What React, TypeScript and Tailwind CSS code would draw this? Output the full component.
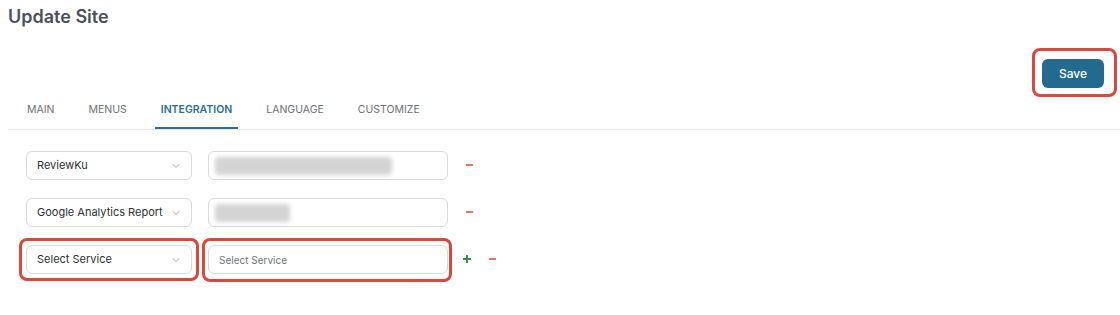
import { ChevronDown } from 'lucide-react';

const tabs = ['Main', 'Menus', 'Integration', 'Language', 'Customize'];

function Highlight() {
    return <div className="pointer-events-none absolute -inset-[7px] rounded-lg border-[3px] border-[#d9473d]" />;
}

function RemoveMark() {
    return <span className="ml-[18px] mt-[13px] block h-[2px] w-[7px] self-start bg-[#e87272]" />;
}

function AddMark() {
    return (
        <span className="relative ml-[15px] mt-[10px] block h-[8px] w-[8px] self-start">
            <span className="absolute left-0 top-[3px] h-[2px] w-[8px] bg-[#2e9648]" />
            <span className="absolute left-[3px] top-0 h-[8px] w-[2px] bg-[#2e9648]" />
        </span>
    );
}

function ServiceSelect({ value }: { value: string }) {
    return (
        <div className="flex h-[29px] w-[166px] items-center justify-between rounded-md border border-[#d6d9de] bg-white pl-[10px] pr-[9px]">
            <span className="whitespace-nowrap text-[11px] text-[#2b2f36]">{value}</span>
            <ChevronDown size={12} strokeWidth={1.5} className="shrink-0 text-[#8a8f98]" />
        </div>
    );
}

function BlurredInput({ blurWidth }: { blurWidth: number }) {
    return (
        <div className="flex h-[29px] w-[240px] items-center rounded-md border border-[#d6d9de] bg-white px-[6px]">
            <div className="h-[18px] rounded-sm bg-[#d4d4d4] blur-[2px]" style={{ width: blurWidth }} />
        </div>
    );
}

export default function App() {
    const rows = [
        { service: 'ReviewKu', blur: 177 },
        { service: 'Google Analytics Report', blur: 75 },
    ];

    return (
        <div className="min-h-[315px] w-[1120px] bg-white pl-[8px] font-['Inter',sans-serif]">
            <h1 className="pt-[6px] text-[18px] font-semibold leading-[22px] text-[#4a505e]">Update Site</h1>

            <div className="mt-[31px] flex justify-end pr-[16px]">
                <div className="relative">
                    <button className="h-[29px] w-[62px] rounded-md bg-[#236a8e] text-[12px] font-medium text-white">Save</button>
                    <div className="pointer-events-none absolute -bottom-[9px] -left-[10px] -right-[13px] -top-[11px] rounded-lg border-[3px] border-[#d9473d]" />
                </div>
            </div>

            <nav className="mt-[9px] flex gap-[22px] border-b border-[#e6e8eb] pl-[13px]">
                {tabs.map((tab) => (
                    <button
                        key={tab}
                        className={`border-b-2 px-[6px] pb-[9px] pt-[5px] text-[10.5px] uppercase leading-[16px] ${tab === 'Integration' ? 'border-[#2c6e91] font-semibold text-[#2c6e91]' : 'border-transparent text-[#6b7078]'}`}
                    >
                        {tab}
                    </button>
                ))}
            </nav>

            <div className="flex flex-col gap-[18px] pl-[18px] pt-[21px]">
                {rows.map((row) => (
                    <div key={row.service} className="flex items-center">
                        <ServiceSelect value={row.service} />
                        <div className="ml-[16px]">
                            <BlurredInput blurWidth={row.blur} />
                        </div>
                        <RemoveMark />
                    </div>
                ))}
                <div className="flex items-center">
                    <div className="relative">
                        <ServiceSelect value="Select Service" />
                        <Highlight />
                    </div>
                    <div className="relative ml-[16px]">
                        <input
                            placeholder="Select Service"
                            className="h-[29px] w-[240px] rounded-md border border-[#d6d9de] bg-white px-[10px] text-[10px] text-[#2b2f36] placeholder:text-[#6f747c] focus:outline-none"
                        />
                        <div className="pointer-events-none absolute -bottom-[8px] -left-[6px] -right-[4px] -top-[7px] rounded-lg border-[3px] border-[#d9473d]" />
                    </div>
                    <AddMark />
                    <span className="ml-[18px] mt-[13px] block h-[2px] w-[7px] self-start bg-[#e87272]" />
                </div>
            </div>
        </div>
    );
}
